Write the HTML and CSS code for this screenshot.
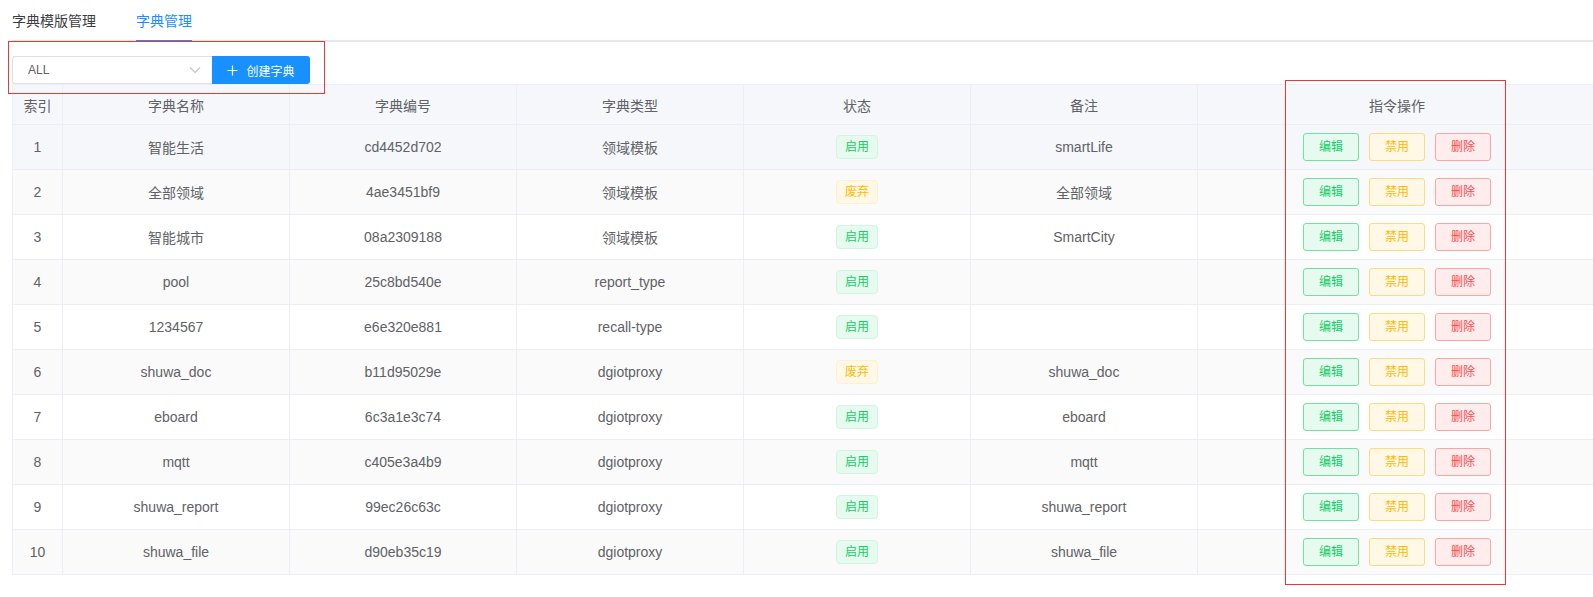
FILE: index.html
```html
<!DOCTYPE html>
<html lang="zh">
<head>
<meta charset="utf-8">
<title>字典管理</title>
<link rel="stylesheet" href="styles.css">
</head>
<body>
<div class="page">
  <div class="tabs">
    <div class="tab">字典模版管理</div>
    <div class="tab active">字典管理</div>
  </div>
  <div class="toolbar">
    <div class="select">
      <span>ALL</span>
      <svg class="chev" width="12" height="8" viewBox="0 0 12 8"><path d="M1 1.5 L6 6.5 L11 1.5" fill="none" stroke="#c0c4cc" stroke-width="1.1"/></svg>
    </div>
    <button class="btn-primary">
      <svg width="11" height="11" viewBox="0 0 11 11"><path d="M5.5 0.5 V10.5 M0.5 5.5 H10.5" stroke="#fff" stroke-width="1.2"/></svg>
      <span>创建字典</span>
    </button>
  </div>
  <table class="grid">
    <colgroup>
      <col class="c-idx"><col class="c-w"><col class="c-w"><col class="c-w"><col class="c-w"><col class="c-w"><col>
    </colgroup>
    <thead>
      <tr><th>索引</th><th>字典名称</th><th>字典编号</th><th>字典类型</th><th>状态</th><th>备注</th><th>指令操作</th></tr>
    </thead>
    <tbody>
      <tr class="hover"><td>1</td><td>智能生活</td><td>cd4452d702</td><td>领域模板</td><td><span class="tag ok">启用</span></td><td>smartLife</td><td class="ops"><span class="b b-edit">编辑</span><span class="b b-dis">禁用</span><span class="b b-del">删除</span></td></tr>
      <tr class="stripe"><td>2</td><td>全部领域</td><td>4ae3451bf9</td><td>领域模板</td><td><span class="tag warn">废弃</span></td><td>全部领域</td><td class="ops"><span class="b b-edit">编辑</span><span class="b b-dis">禁用</span><span class="b b-del">删除</span></td></tr>
      <tr><td>3</td><td>智能城市</td><td>08a2309188</td><td>领域模板</td><td><span class="tag ok">启用</span></td><td>SmartCity</td><td class="ops"><span class="b b-edit">编辑</span><span class="b b-dis">禁用</span><span class="b b-del">删除</span></td></tr>
      <tr class="stripe"><td>4</td><td>pool</td><td>25c8bd540e</td><td>report_type</td><td><span class="tag ok">启用</span></td><td></td><td class="ops"><span class="b b-edit">编辑</span><span class="b b-dis">禁用</span><span class="b b-del">删除</span></td></tr>
      <tr><td>5</td><td>1234567</td><td>e6e320e881</td><td>recall-type</td><td><span class="tag ok">启用</span></td><td></td><td class="ops"><span class="b b-edit">编辑</span><span class="b b-dis">禁用</span><span class="b b-del">删除</span></td></tr>
      <tr class="stripe"><td>6</td><td>shuwa_doc</td><td>b11d95029e</td><td>dgiotproxy</td><td><span class="tag warn">废弃</span></td><td>shuwa_doc</td><td class="ops"><span class="b b-edit">编辑</span><span class="b b-dis">禁用</span><span class="b b-del">删除</span></td></tr>
      <tr><td>7</td><td>eboard</td><td>6c3a1e3c74</td><td>dgiotproxy</td><td><span class="tag ok">启用</span></td><td>eboard</td><td class="ops"><span class="b b-edit">编辑</span><span class="b b-dis">禁用</span><span class="b b-del">删除</span></td></tr>
      <tr class="stripe"><td>8</td><td>mqtt</td><td>c405e3a4b9</td><td>dgiotproxy</td><td><span class="tag ok">启用</span></td><td>mqtt</td><td class="ops"><span class="b b-edit">编辑</span><span class="b b-dis">禁用</span><span class="b b-del">删除</span></td></tr>
      <tr><td>9</td><td>shuwa_report</td><td>99ec26c63c</td><td>dgiotproxy</td><td><span class="tag ok">启用</span></td><td>shuwa_report</td><td class="ops"><span class="b b-edit">编辑</span><span class="b b-dis">禁用</span><span class="b b-del">删除</span></td></tr>
      <tr class="stripe"><td>10</td><td>shuwa_file</td><td>d90eb35c19</td><td>dgiotproxy</td><td><span class="tag ok">启用</span></td><td>shuwa_file</td><td class="ops"><span class="b b-edit">编辑</span><span class="b b-dis">禁用</span><span class="b b-del">删除</span></td></tr>
    </tbody>
  </table>
  <div class="anno anno-toolbar"></div>
  <div class="anno anno-ops"></div>
</div>
</body>
</html>
```

FILE: styles.css
```css
html, body {
  margin: 0;
  padding: 0;
  background: #fff;
}
body {
  font-family: "Liberation Sans", "Noto Sans CJK SC", sans-serif;
  font-size: 14px;
  color: #606266;
}
.page {
  position: relative;
  padding-left: 12px;
  height: 597px;
  overflow: hidden;
}
.tabs {
  display: flex;
  height: 40px;
  border-bottom: 2px solid #e4e7ed;
}
.tab {
  height: 40px;
  line-height: 42px;
  padding: 0 20px;
  color: #3a3d42;
  font-size: 14px;
  position: relative;
}
.tab:first-child {
  padding-left: 0;
}
.tab.active {
  color: #1890ff;
}
.tab.active::after {
  content: "";
  position: absolute;
  left: 20px;
  right: 20px;
  bottom: -2px;
  height: 2px;
  background: #1890ff;
}
.toolbar {
  display: flex;
  margin-top: 14px;
  height: 28px;
}
.select {
  box-sizing: border-box;
  width: 200px;
  height: 28px;
  border: 1px solid #dcdfe6;
  border-right: none;
  border-radius: 3px 0 0 3px;
  display: flex;
  align-items: center;
  justify-content: space-between;
  padding: 0 11px 0 15px;
  font-size: 12px;
  color: #606266;
}
.chev {
  display: block;
}
.btn-primary {
  box-sizing: border-box;
  width: 98px;
  height: 28px;
  border: none;
  border-radius: 0 3px 3px 0;
  background: #1890ff;
  color: #fff;
  font-family: inherit;
  font-size: 12px;
  display: flex;
  align-items: center;
  justify-content: center;
  gap: 8px;
  padding: 0;
}
.btn-primary svg {
  display: block;
}
.grid {
  width: calc(100% + 4px);
  table-layout: fixed;
  border-collapse: separate;
  border-spacing: 0;
  border-top: 1px solid #ebeef5;
  border-left: 1px solid #ebeef5;
}
.c-idx { width: 50px; }
.c-w { width: 227px; }
.grid th, .grid td {
  box-sizing: border-box;
  border-right: 1px solid #ebeef5;
  border-bottom: 1px solid #ebeef5;
  padding: 0;
  text-align: center;
  font-weight: normal;
  white-space: nowrap;
}
.grid th {
  height: 40px;
  background: #f5f7fa;
  color: #606266;
  font-size: 14px;
}
.grid td {
  height: 45px;
  font-size: 14px;
}
.grid tr.stripe td {
  background: #fafafa;
}
.grid tr.hover td {
  background: #f5f7fa;
}
.tag {
  display: inline-block;
  box-sizing: border-box;
  height: 24px;
  line-height: 22px;
  padding: 0 8px;
  font-size: 12px;
  border-radius: 4px;
  border: 1px solid;
  vertical-align: middle;
}
.tag.ok {
  background: #e7faf0;
  border-color: #d0f5e0;
  color: #13ce66;
}
.tag.warn {
  background: #fff8e6;
  border-color: #fff1cc;
  color: #ffba00;
}
.ops {
  font-size: 0;
}
.b {
  display: inline-block;
  box-sizing: border-box;
  width: 56px;
  height: 28px;
  line-height: 26px;
  font-size: 12px;
  border: 1px solid;
  border-radius: 3px;
  vertical-align: middle;
  margin: 0 5px;
}
.b-edit {
  background: #e7faf0;
  border-color: #71e2a3;
  color: #13ce66;
}
.b-dis {
  background: #fff8e6;
  border-color: #ffdb7f;
  color: #ffba00;
}
.b-del {
  background: #ffeded;
  border-color: #ffa4a4;
  color: #ff4949;
}
.anno {
  position: absolute;
  border: 1px solid #ee3636;
  pointer-events: none;
}
.anno-toolbar {
  left: 8px;
  top: 41px;
  width: 315px;
  height: 51px;
}
.anno-ops {
  left: 1285px;
  top: 80px;
  width: 219px;
  height: 503px;
}
```
